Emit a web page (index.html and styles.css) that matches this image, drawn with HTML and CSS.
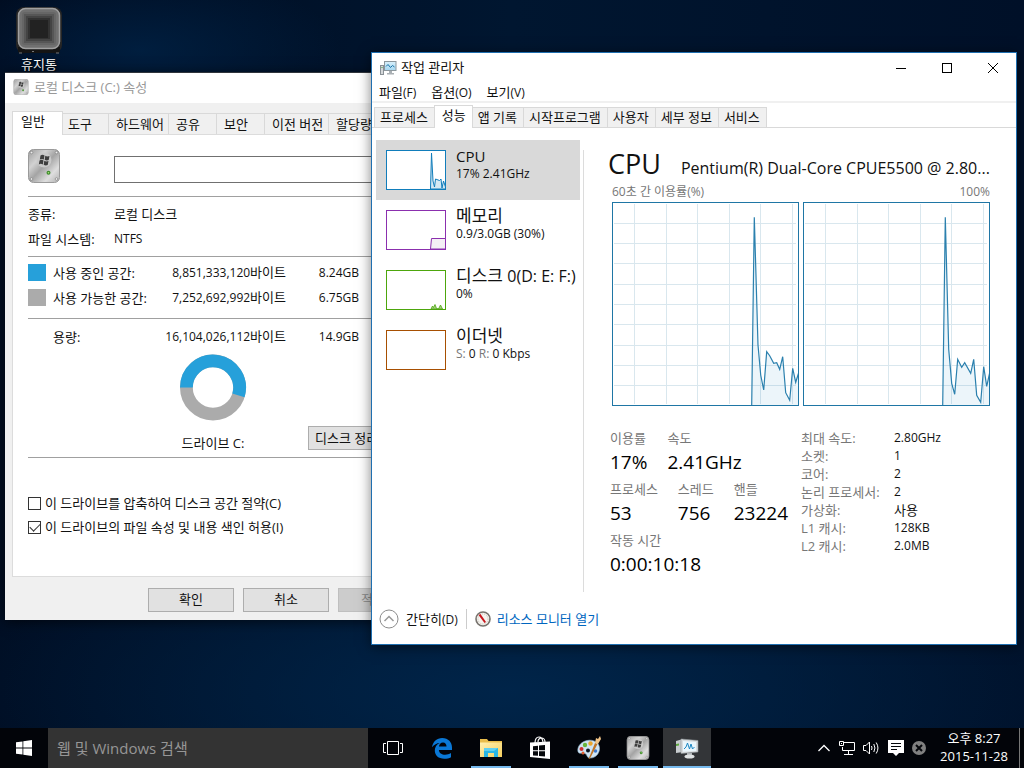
FILE: index.html
```html
<!DOCTYPE html>
<html lang="ko">
<head>
<meta charset="utf-8">
<title>작업 관리자</title>
<link rel="stylesheet" href="styles.css">
</head>
<body>
<svg class="defs" width="0" height="0" aria-hidden="true">
  <defs>
    <linearGradient id="metal" x1="0" y1="0" x2="1" y2="1">
      <stop offset="0" stop-color="#9c9c9c"/><stop offset=".3" stop-color="#d2d2d2"/><stop offset=".5" stop-color="#a4a4a4"/><stop offset=".75" stop-color="#dedede"/><stop offset="1" stop-color="#b0b0b0"/>
    </linearGradient>
    <linearGradient id="folder" x1="0" y1="0" x2="1" y2="1">
      <stop offset="0" stop-color="#fff0b0"/><stop offset="1" stop-color="#f5cf60"/>
    </linearGradient>
    <linearGradient id="screen" x1="0" y1="0" x2="0" y2="1">
      <stop offset="0" stop-color="#d9f0fb"/><stop offset="1" stop-color="#a4d6f0"/>
    </linearGradient>
    <symbol id="disk" viewBox="0 0 32 34">
      <rect x=".5" y=".5" width="31" height="33" rx="5" fill="url(#metal)" stroke="#9a9a9a"/>
      <circle cx="3.500" cy="3.500" r="1.300" fill="#eee" stroke="#777" stroke-width=".6"/>
      <circle cx="28.500" cy="3.500" r="1.300" fill="#eee" stroke="#777" stroke-width=".6"/>
      <circle cx="3.500" cy="30" r="1.300" fill="#eee" stroke="#777" stroke-width=".6"/>
      <circle cx="28.500" cy="30" r="1.300" fill="#eee" stroke="#777" stroke-width=".6"/>
      <circle cx="16" cy="11" r="7.500" fill="#c9c9c9"/>
      <path d="M12.500 6.500q2-1.300 4 0l-.7 4q-2-1.200-4 0zM17.300 6.800q2 1.200 4.200.2l-.8 4q-2 1-4-.2zM11.500 11.400q2-1.200 4 0l-.7 4q-2-1.200-4 0zM16.300 11.800q2 1.200 4.200.2l-.8 4q-2 1-4-.2z" fill="#3e3e3e"/>
      <circle cx="20.500" cy="23.800" r="2" fill="#3f8a2c"/><circle cx="20.500" cy="23.800" r=".8" fill="#a7e87b"/>
    </symbol>
    <symbol id="grid" viewBox="0 0 187 204">
      <path d="M22.500 2v200M54.500 2v200M85.500 2v200M117.500 2v200M148.500 2v200M180.500 2v200M2 21.500h182M2 41.500h182M2 61.500h182M2 82.500h182M2 102.500h182M2 122.500h182M2 143.500h182M2 163.500h182M2 183.500h182" stroke="#d9e7ee" fill="none"/>
    </symbol>
  </defs>
</svg>

<div class="screen">
  <main class="desktop">
    <a class="shortcut" href="#">
      <svg width="48" height="50" viewBox="0 0 48 50" aria-hidden="true">
        <rect x="1" y="2" width="46" height="46" rx="8" fill="#252525"/>
        <path d="M3 42h42v5q-2 2-7 1H10q-5 1-7-1z" fill="#141414"/>
        <rect x="3.500" y="3.500" width="41" height="40" rx="7" fill="#707070" stroke="#a0a0a0" stroke-width="1.500"/>
        <rect x="7" y="7" width="34" height="33" rx="3" fill="#666"/>
        <rect x="9" y="9" width="30" height="29" fill="#565656"/>
        <rect x="11" y="11" width="26" height="25" fill="#444"/>
        <rect x="13" y="13" width="22" height="21" fill="#323232"/>
        <rect x="15" y="15" width="18" height="18" fill="#222"/>
        <path d="M4 48h3M41 48h3M17 46.500h2" stroke="#777" stroke-width="1"/>
      </svg>
      <span>휴지통</span>
    </a>

    <section class="window props" aria-label="로컬 디스크 (C:) 속성">
      <header class="props-title">
        <svg width="16" height="16" aria-hidden="true"><use href="#disk"/></svg>
        <span>로컬 디스크 (C:) 속성</span>
      </header>
      <div class="props-body">
        <div class="props-tabs" role="tablist">
          <button class="ptab ptab-on" role="tab">일반</button>
          <button class="ptab short" role="tab">도구</button>
          <button class="ptab wide" role="tab">하드웨어</button>
          <button class="ptab" role="tab">공유</button>
          <button class="ptab" role="tab">보안</button>
          <button class="ptab wider" role="tab">이전 버전</button>
          <button class="ptab" role="tab">할당량</button>
        </div>
        <div class="sheet">
          <div class="label-row">
            <svg width="32" height="34" aria-hidden="true"><use href="#disk"/></svg>
            <input class="label-input" type="text" aria-label="볼륨 레이블">
          </div>
          <dl class="facts">
            <dt>종류:</dt><dd>로컬 디스크</dd>
            <dt>파일 시스템:</dt><dd class="small">NTFS</dd>
          </dl>
          <div class="usage">
            <table class="space">
              <tr><td class="key"><i class="swatch used"></i></td><th>사용 중인 공간:</th><td class="bytes"><span class="small">8,851,333,120</span>바이트</td><td class="gb small">8.24GB</td></tr>
              <tr><td class="key"><i class="swatch free"></i></td><th>사용 가능한 공간:</th><td class="bytes"><span class="small">7,252,692,992</span>바이트</td><td class="gb small">6.75GB</td></tr>
            </table>
          </div>
          <div class="capacity">
            <table class="space">
              <tr><td class="key"></td><th>용량:</th><td class="bytes"><span class="small">16,104,026,112</span>바이트</td><td class="gb small">14.9GB</td></tr>
            </table>
            <div class="drive">
              <div class="drive-chart">
                <svg width="68" height="67" viewBox="0 0 68 68" aria-hidden="true">
                  <circle cx="34" cy="34" r="27" fill="none" stroke="#ababab" stroke-width="13"/>
                  <path d="M7 34a27 27 0 1 1 52.800 8" fill="none" stroke="#26a0da" stroke-width="13"/>
                </svg>
                <span>드라이브 C:</span>
              </div>
              <button class="btn cleanup">디스크 정리(D)</button>
            </div>
          </div>
          <div class="options">
            <label><input class="check" type="checkbox">이 드라이브를 압축하여 디스크 공간 절약(C)</label>
            <label><input class="check" type="checkbox" checked>이 드라이브의 파일 속성 및 내용 색인 허용(I)</label>
          </div>
        </div>
        <footer class="actions">
          <button class="btn">확인</button>
          <button class="btn">취소</button>
          <button class="btn" disabled>적용(A)</button>
        </footer>
      </div>
    </section>

    <section class="window taskmgr" aria-label="작업 관리자">
      <header class="tm-title">
        <svg width="17" height="16" viewBox="0 0 17 16" aria-hidden="true">
          <rect x=".5" y="5.500" width="3" height="9" fill="#d5d8da" stroke="#8a9196"/><path d="M1.500 7.500h1" stroke="#3b9b3b"/>
          <rect x="4.500" y="1.500" width="11.500" height="9" fill="url(#screen)" stroke="#8c979d"/>
          <path d="M6 6.500l2-2 2.500 3 2-2 2 1.500" fill="none" stroke="#1673a8"/>
          <path d="M9 11h3v2h-3zM7 13h7v1.500H7z" fill="#aab0b4"/>
        </svg>
        <h1>작업 관리자</h1>
        <div class="caption">
          <button aria-label="최소화"><svg width="12" height="12"><path d="M1 6.500h10" stroke="#000"/></svg></button>
          <button aria-label="최대화"><svg width="12" height="12"><rect x="1.500" y="1.500" width="9" height="9" fill="none" stroke="#000"/></svg></button>
          <button aria-label="닫기"><svg width="12" height="12"><path d="M1 1l10 10M11 1L1 11" stroke="#000"/></svg></button>
        </div>
      </header>
      <nav class="menu">
        <button>파일<span class="small">(F)</span></button><button>옵션<span class="small">(O)</span></button><button>보기<span class="small">(V)</span></button>
      </nav>
      <div class="tabs" role="tablist">
        <button class="tab" role="tab">프로세스</button>
        <button class="tab tab-on" role="tab">성능</button>
        <button class="tab" role="tab">앱 기록</button>
        <button class="tab" role="tab">시작프로그램</button>
        <button class="tab" role="tab">사용자</button>
        <button class="tab" role="tab">세부 정보</button>
        <button class="tab" role="tab">서비스</button>
      </div>
      <div class="tm-body">
        <aside class="list">
          <button class="item item-on">
            <svg class="thumb" width="60" height="40" viewBox="0 0 60 40" aria-hidden="true">
              <rect x=".5" y=".5" width="59" height="39" fill="#fff" stroke="#117dbb"/>
              <path d="M44.500 39l1-36 1.500 28 1.500 6 1-8 4 1.500 1.500-1.500 1 9 1.500-7 2 6v2z" fill="#d5e9f3" stroke="#117dbb"/>
            </svg>
            <span class="item-text"><span class="latin-name">CPU</span><span class="value">17% 2.41GHz</span></span>
          </button>
          <button class="item">
            <svg class="thumb" width="60" height="40" viewBox="0 0 60 40" aria-hidden="true">
              <rect x=".5" y=".5" width="59" height="39" fill="#fff" stroke="#8b2fae"/>
              <path d="M44.500 39l1-10.500h14V39z" fill="#f4f0f5" stroke="#8b2fae"/>
            </svg>
            <span class="item-text"><span class="name">메모리</span><span class="value">0.9/3.0GB (30%)</span></span>
          </button>
          <button class="item">
            <svg class="thumb" width="60" height="40" viewBox="0 0 60 40" aria-hidden="true">
              <rect x=".5" y=".5" width="59" height="39" fill="#fff" stroke="#4da60c"/>
              <path d="M45 39l1.500-3 1 1.500 1.500-3 1.500 4 2 .5 2-4 2 4z" fill="#a5cf85" stroke="#4da60c" stroke-width=".8"/>
            </svg>
            <span class="item-text"><span class="name">디스크 <span class="drives">0(D: E: F:)</span></span><span class="value">0%</span></span>
          </button>
          <button class="item">
            <svg class="thumb" width="60" height="40" viewBox="0 0 60 40" aria-hidden="true">
              <rect x=".5" y=".5" width="59" height="39" fill="#fff" stroke="#a74f01"/>
            </svg>
            <span class="item-text"><span class="name">이더넷</span><span class="value"><span class="muted">S:</span> 0 <span class="muted">R:</span> 0 Kbps</span></span>
          </button>
        </aside>
        <article class="detail">
          <div class="heading"><h2>CPU</h2><p>Pentium(R) Dual-Core CPUE5500 @ 2.80...</p></div>
          <div class="axis"><span>60초 간 이용률(%)</span><span>100%</span></div>
          <div class="charts">
            <svg viewBox="0 0 187 204" aria-hidden="true">
              <rect width="187" height="204" fill="#fff"/>
              <use href="#grid"/>
              <path d="M139.700 203L142.300 15.300 146 143l2.700 30 3 15 3-38.300 3 4 4 7.600 3-.6 3 6.600 3-12.600 3 36 4 7.600 3-32 3 14 3-9.600V203z" fill="#117dbb" fill-opacity=".08"/>
              <path d="M139.700 203L142.300 15.300 146 143l2.700 30 3 15 3-38.300 3 4 4 7.600 3-.6 3 6.600 3-12.600 3 36 4 7.600 3-32 3 14 3-9.600" fill="none" stroke="#2b80ae" stroke-width="1.200"/>
              <rect x=".5" y=".5" width="186" height="203" fill="none" stroke="#1f76a5"/>
            </svg>
            <svg viewBox="0 0 187 204" aria-hidden="true">
              <rect width="187" height="204" fill="#fff"/>
              <use href="#grid"/>
              <path d="M139.700 203L142.300 15.300l3.400 132 3 34 3 11 3-35 4 8 3-4.600 6 10.600 3-14 3 36 4 7 3-35.600 3 19.600 3-13.600V203z" fill="#117dbb" fill-opacity=".08"/>
              <path d="M139.700 203L142.300 15.300l3.400 132 3 34 3 11 3-35 4 8 3-4.600 6 10.600 3-14 3 36 4 7 3-35.600 3 19.600 3-13.600" fill="none" stroke="#2b80ae" stroke-width="1.200"/>
              <rect x=".5" y=".5" width="186" height="203" fill="none" stroke="#1f76a5"/>
            </svg>
          </div>
          <div class="stats">
            <div class="live">
              <dl class="row"><div><dt>이용률</dt><dd>17%</dd></div><div><dt>속도</dt><dd>2.41GHz</dd></div></dl>
              <dl class="row"><div><dt>프로세스</dt><dd>53</dd></div><div><dt>스레드</dt><dd>756</dd></div><div><dt>핸들</dt><dd>23224</dd></div></dl>
              <dl class="row"><div><dt>작동 시간</dt><dd>0:00:10:18</dd></div></dl>
            </div>
            <dl class="spec">
              <dt>최대 속도:</dt><dd>2.80GHz</dd>
              <dt>소켓:</dt><dd>1</dd>
              <dt>코어:</dt><dd>2</dd>
              <dt>논리 프로세서:</dt><dd>2</dd>
              <dt>가상화:</dt><dd class="ko">사용</dd>
              <dt>L1 캐시:</dt><dd>128KB</dd>
              <dt>L2 캐시:</dt><dd>2.0MB</dd>
            </dl>
          </div>
        </article>
      </div>
      <footer class="tm-foot">
        <button class="fewer">
          <svg width="20" height="20" viewBox="0 0 20 20" aria-hidden="true"><circle cx="10" cy="10" r="9" fill="#fff" stroke="#8c8c8c"/><path d="M5.500 12l4.500-4.500 4.500 4.500" fill="none" stroke="#999" stroke-width="1.500"/></svg>
          <span>간단히<span class="small">(D)</span></span>
        </button>
        <a class="monitor" href="#">
          <svg width="16" height="16" viewBox="0 0 16 16" aria-hidden="true"><circle cx="8" cy="8" r="7" fill="#f6f4f0" stroke="#77736e" stroke-width="1.600"/><circle cx="8" cy="8" r="5" fill="none" stroke="#c9c2b8" stroke-dasharray="1 1"/><path d="M3.500 4l2-1 5.500 8-1.500 1z" fill="#c8161d"/></svg>
          <span>리소스 모니터 열기</span>
        </a>
      </footer>
    </section>
  </main>

  <footer class="taskbar">
    <button class="task" aria-label="시작"><svg width="16" height="16" viewBox="0 0 16 16"><path d="M0 2.300L6.500 1.400v6.200H0zM7.300 1.300L16 0v7.600H7.300zM0 8.400h6.500v6.200L0 13.700zM7.300 8.400H16V16l-8.700-1.300z" fill="#fff"/></svg></button>
    <input class="search" type="search" placeholder="웹 및 Windows 검색" aria-label="웹 및 Windows 검색">
    <nav class="apps">
      <button class="task" aria-label="작업 보기"><svg width="20" height="16" viewBox="0 0 20 16"><path d="M4.500 1.500h11v13h-11zM3 3.500H.5v9H3M17 3.500h2.500v9H17" fill="none" stroke="#fff"/></svg></button>
      <button class="task" aria-label="Edge"><svg width="22" height="22" viewBox="0 0 22 22"><path d="M1 10.300C1.900 4.500 5.800 1 11.200 1c6.200 0 9.800 4.400 9.800 9.400V13H7.900c.1 3.200 3 4.800 6.200 4.800 2.200 0 4.100-.6 5.900-1.700v4.200c-1.700 1-4.200 1.500-6.800 1.500-5.700 0-9.400-3.300-9.400-8.200 0-3.500 1.700-6.200 4.900-7.600C6 6.200 3 7.500 1 10.300zm7-.9h7.500c0-2.200-1.200-4-3.500-4s-3.800 1.900-4 4z" fill="#0a78d6"/></svg></button>
      <button class="task running" aria-label="파일 탐색기"><svg width="22" height="20" viewBox="0 0 22 20"><path d="M0 1h7l1.500 2H22v16H0z" fill="#e9bd4b"/><path d="M0 4.500h22V19H0z" fill="url(#folder)"/><path d="M4 10h14v9h-4v-4H8v4H4z" fill="#29b6e4"/><path d="M4 10h14l-4 3H4z" fill="#5fd0f0"/></svg></button>
      <button class="task" aria-label="스토어"><svg width="22" height="24" viewBox="0 0 22 24"><path d="M1 6.500l20-1v17.500L1 21z" fill="#fff"/><path d="M6 7c0-4 1.500-6 4-6s3.500 2 4 5M9 6c0-2.500 1.500-4 3.500-4S16 4 16 6" fill="none" stroke="#fff" stroke-width="1.200"/><path d="M4 10.200l5-.5v4.600H4zM10 9.600l6-.6v5.300h-6zM4 15.300h5v4.500l-5-.4zM10 15.300h6v5.200l-6-.6z" fill="#05070b"/></svg></button>
      <button class="task running" aria-label="그림판"><svg width="24" height="24" viewBox="0 0 24 24"><path d="M10 4.500C17 3 23 7 22.500 13c-.4 5.500-5 9.500-10 9-3-.3-2-3.500-4.500-4.500S1 19 .8 14.500C.6 9.500 5 5.500 10 4.500z" fill="#cfe4f4" stroke="#8fb3cf" stroke-width=".6"/><circle cx="8" cy="9" r="2.200" fill="#68b53c"/><circle cx="13.500" cy="7.500" r="2.200" fill="#e9a52e"/><circle cx="4.500" cy="13" r="2" fill="#cf3030"/><circle cx="6" cy="17" r="1.500" fill="#e05f32"/><circle cx="11" cy="14.500" r="2" fill="#0c1420"/><circle cx="18.500" cy="15" r="1.800" fill="#3b79cf"/><path d="M11.500 23l6.500-16 2.500 1L13 22.500z" fill="#bf7629"/><path d="M18 7l1-5 2 1 2-3 1 3-3 5z" fill="#f0c488"/></svg></button>
      <button class="task running" aria-label="로컬 디스크 (C:) 속성"><svg width="24" height="24"><use href="#disk"/></svg></button>
      <button class="task running active" aria-label="작업 관리자"><svg width="24" height="22" viewBox="0 0 24 22"><path d="M1 4l7-2v13l-7 1z" fill="#c9cdd0"/><path d="M1 7l3-.5v2L1 9z" fill="#5ea83f"/><path d="M6 2l17 1.500V15L6 16.500z" fill="#d9dcde" stroke="#8d9397" stroke-width=".6"/><path d="M8 4l13 1v9L8 14.700z" fill="#eaf6fc"/><path d="M9 12l2-2 1.500-4 2 6 1.500-5 1.500 5 2-2" fill="none" stroke="#1c86c2"/><path d="M12 16h5v2h-5z" fill="#aeb3b6"/><ellipse cx="14.500" cy="19.500" rx="5" ry="2" fill="#dfe2e3"/></svg></button>
    </nav>
    <div class="tray">
      <button aria-label="숨겨진 아이콘"><svg width="14" height="16" viewBox="0 0 14 16"><path d="M1.500 11L7 5.500 12.500 11" fill="none" stroke="#fff" stroke-width="1.300"/></svg></button>
      <button aria-label="네트워크"><svg width="16" height="16" viewBox="0 0 16 16"><path d="M5 2.500h10.500v8H3.500V7M9.500 11v3M5 14.500h9M.5 1.500h4v4h-4zM2.500 3v1" fill="none" stroke="#fff"/></svg></button>
      <button aria-label="볼륨"><svg width="17" height="16" viewBox="0 0 17 16"><path d="M.5 5.500H3L6.500 2v12L3 10.500H.5zM8.500 6q1 2 0 4M10.800 4q2.300 4 0 8M13.200 2.500q3.500 5.500 0 11" fill="none" stroke="#fff"/></svg></button>
      <button aria-label="알림"><svg width="16" height="16" viewBox="0 0 16 16"><path d="M0 0h16v13h-5l-3 3-3-3H0z" fill="#fff"/><path d="M3 3.500h10M3 6.500h10M3 9.500h6" stroke="#05070b"/></svg></button>
      <button aria-label="상태"><svg width="14" height="14" viewBox="0 0 14 14"><circle cx="7" cy="7" r="7" fill="#808080"/><path d="M4 4l6 6M10 4l-6 6" stroke="#05070b" stroke-width="2"/></svg></button>
      <button class="clock"><span>오후 8:27</span><span>2015-11-28</span></button>
      <button class="peek" aria-label="바탕 화면 보기"></button>
    </div>
  </footer>
</div>
</body>
</html>
```
FILE: styles.css
```css
* { box-sizing: border-box; }

body, dl, dd, h1, h2, p { margin: 0; }

body, button, input {
  font-family: "Open Sans", "Noto Sans CJK KR", sans-serif;
  font-size: 13px;
  line-height: 18px;
  color: #111;
}

button {
  margin: 0;
  padding: 0;
  border: 0;
  background: none;
  text-align: left;
  white-space: nowrap;
}

svg { display: block; flex: none; }
.defs { position: absolute; }
.small { font-size: 12px; }

.screen {
  display: flex;
  flex-direction: column;
  height: 100vh;
  min-height: 700px;
  overflow: hidden;
  background:
    radial-gradient(ellipse 200px 80px at 140px 50px, rgba(0, 40, 80, .6) 0%, transparent 100%),
    radial-gradient(ellipse 620px 200px at 50% 90%, rgba(0, 38, 76, .9) 0%, transparent 100%),
    linear-gradient(90deg, #000c20, #001630 50%, #001028);
}

.desktop { position: relative; flex: 1; }

.shortcut {
  position: absolute;
  left: 9px;
  top: 5px;
  width: 60px;
  display: flex;
  flex-direction: column;
  align-items: center;
  color: #fff;
  text-decoration: none;
  text-shadow: 1px 1px 2px #000;
}

.window { position: absolute; display: flex; flex-direction: column; }

/* Drive properties */
.props {
  left: 5px;
  top: 72px;
  width: 400px;
  border-top: 1px solid #30353c;
  background: #f0f0f0;
  box-shadow: 0 2px 12px rgba(0, 0, 0, .6);
}
.props-title {
  display: flex;
  align-items: center;
  gap: 5px;
  height: 30px;
  padding: 0 8px 2px;
  background: #fff;
  color: #999;
}
.props-body { padding: 8px 7px; }
.props-tabs { display: flex; align-items: flex-end; height: 23px; }
.ptab {
  flex: none;
  width: 48px;
  height: 21px;
  padding: 0 7px 1px;
  border: 1px solid #d9d9d9;
  border-left: 0;
  border-bottom: 0;
}
.ptab.short { width: 46px; padding-left: 5px; }
.ptab.wide { width: 60px; padding-right: 0; }
.ptab.wider { width: 64px; padding-right: 0; }
.ptab-on {
  width: 51px;
  height: 24px;
  margin-bottom: -1px;
  padding: 0 8px 5px;
  border-left: 1px solid #d9d9d9;
  background: #fff;
}
.sheet {
  display: flex;
  flex-direction: column;
  height: 443px;
  padding: 14px 15px;
  border: 1px solid #dcdcdc;
  background: #fff;
}
.label-row { display: flex; align-items: center; gap: 54px; height: 47px; padding-bottom: 13px; }
.label-input { flex: 1; min-width: 0; height: 27px; border: 1px solid #707070; background: #fff; margin-top: 6px; }
.facts {
  display: grid;
  grid-template-columns: 86px 1fr;
  grid-auto-rows: 25px;
  align-items: center;
  height: 60px;
  padding-top: 4px;
  border-top: 1px solid #a0a0a0;
}
.usage { height: 62px; padding-top: 3px; border-top: 1px solid #a0a0a0; }
.space { width: 331px; border-spacing: 0; table-layout: fixed; }
.space tr { height: 25px; }
.space th, .space td { padding: 0; font-weight: 400; text-align: left; white-space: nowrap; vertical-align: middle; }
.space .key { width: 25px; }
.space th { width: 105px; }
.space .bytes { width: 128px; text-align: right; }
.space .gb { text-align: right; }
.swatch { display: block; width: 18px; height: 17px; }
.used { background: #26a0da; }
.free { background: #ababab; }
.capacity { height: 140px; padding-top: 5px; border-top: 1px solid #a0a0a0; border-bottom: 1px solid #a0a0a0; }
.drive { display: flex; align-items: flex-end; justify-content: space-between; height: 103px; }
.drive-chart { display: flex; flex-direction: column; align-items: center; gap: 13px; width: 370px; flex: none; }
.cleanup.btn { flex: none; width: 104px; margin: 0 0 2px -90px; padding: 0 6px; text-align: left; }
.options { display: flex; flex-direction: column; gap: 6px; padding-top: 36px; }
.options label { display: flex; align-items: center; gap: 4px; height: 18px; }
.check {
  appearance: none;
  width: 13px;
  height: 13px;
  margin: 0;
  border: 1px solid #333;
  background: #fff;
  display: grid;
  place-items: center;
}
.check:checked::after {
  content: "";
  width: 9px;
  height: 5px;
  margin-bottom: 3px;
  border: solid #333;
  border-width: 0 0 1px 1px;
  transform: rotate(-45deg);
}
.btn {
  width: 86px;
  height: 24px;
  padding-bottom: 2px;
  border: 1px solid #adadad;
  background: #e1e1e1;
  text-align: center;
}
.btn:disabled { border-color: #bfbfbf; background: #ccc; color: #888; }
.actions { display: flex; gap: 9px; padding: 11px 0 0 136px; }
.actions .btn { flex: none; }

/* Task manager */
.taskmgr {
  left: 371px;
  top: 52px;
  right: 7px;
  border: 1px solid #1f6fb0;
  background: #fff;
  box-shadow: 0 2px 12px rgba(0, 0, 0, .5);
}
.tm-title { display: flex; align-items: center; gap: 4px; height: 30px; padding-left: 8px; }
.tm-title h1 { flex: 1; padding-bottom: 2px; font-size: 13px; font-weight: 400; }
.caption { display: flex; }
.caption button { display: flex; align-items: center; justify-content: center; width: 46px; height: 28px; }
.menu {
  display: flex;
  gap: 15px;
  height: 20px;
  padding: 0 7px;
  border-bottom: 2px solid #f0f0f0;
}
.tabs {
  display: flex;
  align-items: flex-end;
  height: 25px;
  padding-left: 2px;
  border-bottom: 1px solid #d9d9d9;
}
.tab {
  height: 20px;
  margin-right: -1px;
  padding: 0 6px 2px 5px;
  border: 1px solid #d9d9d9;
  border-bottom: 0;
  background: #f0f0f0;
}
.tab-on { height: 23px; margin-bottom: -1px; padding: 0 6px 4px 7px; background: #fff; z-index: 1; }
.tm-body { display: flex; padding: 12px 26px 2px 4px; height: 466px; }
.list { display: flex; flex-direction: column; flex: none; width: 204px; }
.item { display: flex; gap: 10px; height: 60px; padding: 10px 0 10px 10px; }
.item-on { background: #d9d9d9; }
.item-text { display: flex; flex-direction: column; margin-top: -4px; }
.name { font-size: 17px; line-height: 20px; }
.latin-name { font-size: 15px; line-height: 20px; }
.drives { font-size: 16px; line-height: 20px; }
.value { font-size: 12px; line-height: 16px; }
.muted { color: #777; }
.detail {
  flex: 1;
  min-width: 0;
  margin: 10px 0 0 3px;
  padding-left: 24px;
  border-left: 1px solid #dcdcdc;
}
.heading { display: flex; align-items: baseline; gap: 20px; height: 34px; white-space: nowrap; }
.heading h2 { font-size: 27px; line-height: 28px; font-weight: 400; }
.heading p { font-size: 16px; line-height: 24px; }
.axis { display: flex; justify-content: space-between; height: 18px; padding-left: 4px; font-size: 12px; line-height: 16px; color: #777; }
.charts { display: flex; gap: 4px; padding-left: 4px; }
.charts svg { flex: 1 1 0; min-width: 0; }
.stats { display: flex; gap: 12px; padding: 22px 0 0 2px; white-space: nowrap; }
.live { flex: none; width: 179px; }
.row { display: flex; gap: 20px; height: 51px; }
.row dt { color: #777; line-height: 20px; }
.row dd { font-size: 19px; line-height: 28px; color: #000; }
.spec { display: grid; grid-template-columns: 93px auto; grid-auto-rows: 18px; align-content: start; padding-top: 1px; }
.spec dt { color: #777; }
.spec dd { font-size: 12px; }
.spec .ko { font-size: 13px; }
.tm-foot { display: flex; align-items: center; height: 50px; padding: 0 7px; }
.fewer, .monitor { display: flex; align-items: center; gap: 7px; }
.fewer { padding-right: 8px; border-right: 1px solid #ccc; }
.fewer span, .monitor span { line-height: 14px; }
.monitor { gap: 6px; margin-left: 8px; color: #0066bf; text-decoration: none; }

/* Taskbar */
.taskbar { display: flex; height: 40px; background: #020409; color: #fff; z-index: 2; }
.task { display: flex; align-items: center; justify-content: center; position: relative; width: 48px; height: 40px; }
.search {
  width: 320px;
  padding: 0 9px;
  border: 0;
  border-radius: 0;
  background: #333;
  color: #ddd;
  font-size: 15px;
}
.search::placeholder { color: #969696; }
.apps { display: flex; flex: 1; gap: 1px; padding-left: 1px; }
.running::after {
  content: "";
  position: absolute;
  left: 4px;
  right: 4px;
  bottom: 0;
  height: 2px;
  background: #76b9ed;
}
.active { background: #333538; }
.active::after { left: 0; right: 0; }
.tray { display: flex; align-items: center; gap: 8px; }
.tray button { color: #fff; }
.tray .clock { display: flex; flex-direction: column; align-items: center; width: 80px; margin-right: -3px; padding-bottom: 2px; }
.peek { width: 5px; height: 40px; border-left: 1px solid #777; }
```
